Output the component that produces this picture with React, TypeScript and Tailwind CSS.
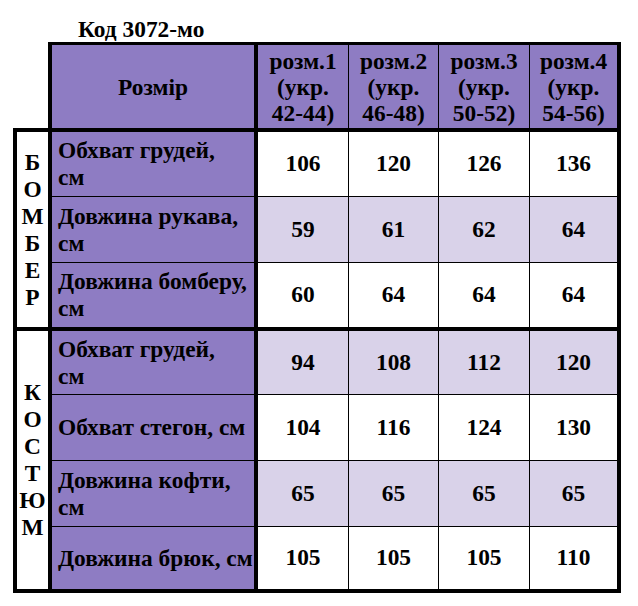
const PURPLE = "bg-[#8e7cc3]";
const LIGHT = "bg-[#d9d2e9]";

type Row = { label: string[]; values: number[]; shaded: boolean; h: string };

const sections: { name: string; rows: Row[] }[] = [
  {
    name: "БОМБЕР",
    rows: [
      { label: ["Обхват грудей,", "см"], values: [106, 120, 126, 136], shaded: false, h: "h-[64px]" },
      { label: ["Довжина рукава,", "см"], values: [59, 61, 62, 64], shaded: true, h: "h-[66px]" },
      { label: ["Довжина бомберу,", "см"], values: [60, 64, 64, 64], shaded: false, h: "h-[65px]" },
    ],
  },
  {
    name: "КОСТЮМ",
    rows: [
      { label: ["Обхват грудей,", "см"], values: [94, 108, 112, 120], shaded: true, h: "h-[63px]" },
      { label: ["Обхват стегон, см"], values: [104, 116, 124, 130], shaded: false, h: "h-[66px]" },
      { label: ["Довжина кофти,", "см"], values: [65, 65, 65, 65], shaded: true, h: "h-[66px]" },
      { label: ["Довжина брюк, см"], values: [105, 105, 105, 110], shaded: false, h: "h-[63px]" },
    ],
  },
];

const sizes = [
  ["розм.1", "(укр.", "42-44)"],
  ["розм.2", "(укр.", "46-48)"],
  ["розм.3", "(укр.", "50-52)"],
  ["розм.4", "(укр.", "54-56)"],
];

// ширини колонок з розмірами (разом з лівою рамкою)
const cols = [
  { w: "w-[94px]", b: "border-l-4" },
  { w: "w-[90px]", b: "border-l" },
  { w: "w-[91px]", b: "border-l" },
  { w: "w-[88px]", b: "border-l" },
];

export default function App() {
  return (
    <div
      className="w-[638px] h-[606px] bg-white pl-[13px] text-black font-bold text-[23.4px]"
      style={{ fontFamily: '"Liberation Serif", "Times New Roman", serif' }}
    >
      <div className="h-[42px] pl-[65px] pt-[16px] leading-[27px] whitespace-nowrap">Код 3072-мо</div>

      {/* Шапка */}
      <div className="ml-[35px] flex border-t-[3px] border-x-4 border-black w-[573px] h-[86px]">
        <div className={`w-[202px] shrink-0 ${PURPLE} flex items-center justify-center pt-[3px]`}>Розмір</div>
        {sizes.map((s, i) => (
          <div
            key={i}
            className={`${cols[i].w} shrink-0 ${cols[i].b} border-black ${PURPLE} flex flex-col items-center justify-center leading-[26px]`}
          >
            {s.map((l) => (
              <span key={l} className="whitespace-nowrap">
                {l}
              </span>
            ))}
          </div>
        ))}
      </div>

      {sections.map((sec, si) => (
        <div
          key={sec.name}
          className={`flex w-[608px] border-x-4 border-t-4 border-black ${si === sections.length - 1 ? "border-b-4" : ""}`}
        >
          <div className="w-[31px] shrink-0 flex flex-col items-center justify-center leading-[27px]">
            {sec.name.split("").map((c, i) => (
              <span key={i}>{c}</span>
            ))}
          </div>
          <div className="flex flex-col border-l-4 border-black">
            {sec.rows.map((r, ri) => (
              <div key={ri} className={`flex ${r.h} ${ri > 0 ? "border-t border-black" : ""}`}>
                <div className={`w-[202px] shrink-0 ${PURPLE} flex flex-col justify-center pl-[6px] leading-[27px]`}>
                  {r.label.map((l) => (
                    <span key={l} className="whitespace-nowrap">
                      {l}
                    </span>
                  ))}
                </div>
                {r.values.map((v, i) => (
                  <div
                    key={i}
                    className={`${cols[i].w} shrink-0 ${cols[i].b} border-black ${r.shaded ? LIGHT : "bg-white"} flex items-center justify-center`}
                  >
                    {v}
                  </div>
                ))}
              </div>
            ))}
          </div>
        </div>
      ))}
    </div>
  );
}
